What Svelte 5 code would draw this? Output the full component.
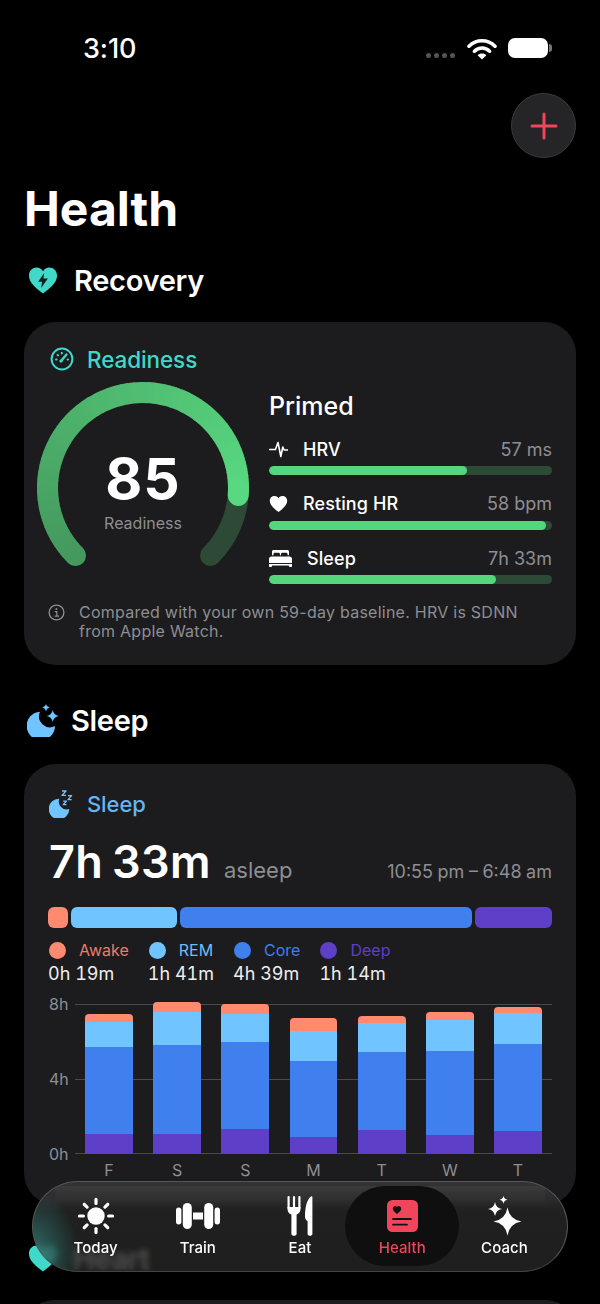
<script>
  const sleepColors = { awake: '#ff8a70', rem: '#70c4ff', core: '#3f7fee', deep: '#5e3fc8' };

  const metrics = [
    { name: 'HRV', value: '57 ms', pct: 70, icon: 'ecg' },
    { name: 'Resting HR', value: '58 bpm', pct: 97.9, icon: 'heart' },
    { name: 'Sleep', value: '7h 33m', pct: 80.2, icon: 'bed' }
  ];

  const legend = [
    { key: 'awake', label: 'Awake', value: '0h 19m', text: '#e87f68' },
    { key: 'rem', label: 'REM', value: '1h 41m', text: '#70bdf5' },
    { key: 'core', label: 'Core', value: '4h 39m', text: '#3f7fee' },
    { key: 'deep', label: 'Deep', value: '1h 14m', text: '#5e3fc8' }
  ];

  // pixel heights per stage, 150px = 8h
  const week = [
    { day: 'F', awake: 7.4, rem: 25.6, core: 87, deep: 19.7 },
    { day: 'S', awake: 10, rem: 33, core: 88.7, deep: 20 },
    { day: 'S', awake: 9.4, rem: 28.6, core: 87, deep: 24.7 },
    { day: 'M', awake: 12.4, rem: 30.6, core: 75.8, deep: 17 },
    { day: 'T', awake: 6.7, rem: 29, core: 78.3, deep: 24 },
    { day: 'W', awake: 7.7, rem: 31.3, core: 84.3, deep: 18.7 },
    { day: 'T', awake: 6, rem: 31.3, core: 86.7, deep: 23 }
  ];

  const tabs = ['Today', 'Train', 'Eat', 'Health', 'Coach'];

  // --- gauge ---
  const cx = 106;
  const cy = 106;
  const r = 95.5;

  function point(deg) {
    const a = (deg * Math.PI) / 180;
    return `${(cx + r * Math.cos(a)).toFixed(2)} ${(cy + r * Math.sin(a)).toFixed(2)}`;
  }

  function arc(from, to) {
    const large = to - from > 180 ? 1 : 0;
    return `M${point(from)} A${r} ${r} 0 ${large} 1 ${point(to)}`;
  }

  const start = 135;
  const sweep = 270 * 0.85;
  const steps = 60;
  const gaugeParts = Array.from({ length: steps }, (_, i) => {
    const t = i / (steps - 1);
    const c = [0x45 + t * (0x58 - 0x45), 0x99 + t * (0xd8 - 0x99), 0x5e + t * (0x80 - 0x5e)].map(Math.round);
    return {
      d: arc(start + (sweep * i) / steps, start + (sweep * (i + 1)) / steps + (i === steps - 1 ? 0 : 0.5)),
      color: `rgb(${c.join(',')})`,
      cap: i === 0 || i === steps - 1
    };
  });

  function star(x, y, s, k = 0.16) {
    const c = s * k;
    return `M${x} ${y - s}Q${x + c} ${y - c} ${x + s} ${y}Q${x + c} ${y + c} ${x} ${y + s}Q${x - c} ${y + c} ${x - s} ${y}Q${x - c} ${y - c} ${x} ${y - s}Z`;
  }

  const sunRays = [0, 45, 90, 135, 180, 225, 270, 315];
  const heartPath = 'M10 18C4 13.5 .8 10.3 .8 6.2 .8 3 3.2 1 5.8 1 7.6 1 9.2 1.9 10 3.4 10.8 1.9 12.4 1 14.2 1 16.8 1 19.2 3 19.2 6.2 19.2 10.3 16 13.5 10 18Z';
</script>

<div class="page">
  <div class="status">
    <span class="clock">3:10</span>
    <div class="status-icons">
      <div class="signal"><i></i><i></i><i></i><i></i></div>
      <svg class="wifi" width="30" height="22" viewBox="0 0 30 22">
        <path d="M2 8.2C9.4 1 20.6 1 28 8.2" fill="none" stroke="#fff" stroke-width="3.6" stroke-linecap="round" />
        <path d="M7.4 13.2C11.8 9 18.2 9 22.6 13.2" fill="none" stroke="#fff" stroke-width="3.6" stroke-linecap="round" />
        <path d="M10.6 17.2C13 14.8 17 14.8 19.4 17.2L15 21.6Z" fill="#fff" />
      </svg>
      <div class="battery"></div>
      <div class="nub"></div>
    </div>
  </div>

  <div class="add-row">
    <button class="add" aria-label="Add">
      <svg width="28" height="28" viewBox="0 0 28 28">
        <path d="M14 2V26M2 14H26" stroke="#f0455a" stroke-width="3" stroke-linecap="round" />
      </svg>
    </button>
  </div>

  <h1>Health</h1>

  <div class="section-head first">
    <svg width="32" height="29" viewBox="0 0 20 19">
      <path d={heartPath} fill="#40d8c8" />
      <path d="M10.8 4.6 6.8 10.4H9.4L8.8 14.4 13.2 8.2H10.3Z" fill="#10201f" />
    </svg>
    <span>Recovery</span>
  </div>

  <section class="card readiness">
    <div class="card-title teal">
      <svg width="24" height="24" viewBox="0 0 24 24" fill="none" stroke="#40d8c8">
        <circle cx="12" cy="12" r="10.4" stroke-width="2" />
        <path d="M11 14 16.5 7.5" stroke-width="2.4" stroke-linecap="round" />
        <path d="M6 12.5H6.6M7.6 8 8 8.4M11.8 5.8V6.4M17.6 12.5H18" stroke-width="2" stroke-linecap="round" />
        <circle cx="11" cy="14" r="1.6" fill="#40d8c8" stroke="none" />
      </svg>
      <span>Readiness</span>
    </div>

    <div class="ready-body">
      <div class="gauge">
        <svg width="212" height="186" viewBox="0 0 212 186" fill="none">
          <path d={arc(135, 405)} stroke="#2c4a36" stroke-width="21" stroke-linecap="round" />
          {#each gaugeParts as part}
            <path d={part.d} stroke={part.color} stroke-width="21" stroke-linecap={part.cap ? 'round' : 'butt'} />
          {/each}
        </svg>
        <div class="gauge-text">
          <div class="score">85</div>
          <div class="score-label">Readiness</div>
        </div>
      </div>

      <div class="metrics">
        <div class="state">Primed</div>
        {#each metrics as m}
          <div class="metric">
            <div class="metric-row">
              {#if m.icon === 'ecg'}
                <svg width="19" height="18" viewBox="0 0 19 18" fill="none">
                  <path d="M.6 9.5H6.4L9 2.5 11.8 16.5 13.8 7 15.2 10H18.6" stroke="#fff" stroke-width="1.6" stroke-linejoin="round" stroke-linecap="round" />
                </svg>
              {:else if m.icon === 'heart'}
                <svg width="19" height="18" viewBox="0 0 20 19"><path d={heartPath} fill="#fff" /></svg>
              {:else}
                <svg width="23" height="17" viewBox="0 0 23 17" fill="#fff">
                  <path d="M3 1.6C3 .7 3.7 0 4.6 0H18.4C19.3 0 20 .7 20 1.6V5.2H18.6V4.4C18.6 3.4 18 2.8 17 2.8H13.6C12.6 2.8 12 3.4 12 4.4V5.2H11V4.4C11 3.4 10.4 2.8 9.4 2.8H6C5 2.8 4.4 3.4 4.4 4.4V5.2H3Z" />
                  <path d="M2.4 6.4H20.6C21.9 6.4 23 7.5 23 8.8V13H0V8.8C0 7.5 1.1 6.4 2.4 6.4Z" />
                  <path d="M0 14H23V16.2C23 16.6 22.6 17 22.2 17H21C20.6 17 20.4 16.8 20.2 16.4L19.8 15.4H3.2L2.8 16.4C2.6 16.8 2.4 17 2 17H.8C.4 17 0 16.6 0 16.2Z" />
                </svg>
              {/if}
              <span class="metric-name">{m.name}</span>
              <span class="metric-value">{m.value}</span>
            </div>
            <div class="track"><div class="fill" style="width: {m.pct}%"></div></div>
          </div>
        {/each}
      </div>
    </div>

    <div class="note">
      <svg width="17" height="17" viewBox="0 0 17 17" fill="none" stroke="#8e8e93">
        <circle cx="8.5" cy="8.5" r="7.4" stroke-width="1.3" />
        <path d="M6.8 7.6H8.8V12M6.6 12.2H11" stroke-width="1.2" />
        <circle cx="8.4" cy="5" r="1" fill="#8e8e93" stroke="none" />
      </svg>
      <p>Compared with your own 59-day baseline. HRV is SDNN from Apple Watch.</p>
    </div>
  </section>

  <div class="section-head sleep-head">
    <svg width="32" height="33" viewBox="0 0 32 33" fill="#70c4ff">
      <path d="M13 7.7A14.2 14.2 0 1 0 28 22 11 11 0 0 1 13 7.7Z" />
      <path d={star(25.7, 12, 6)} />
      <path d={star(19, 3.6, 3.6)} />
    </svg>
    <span>Sleep</span>
  </div>

  <section class="card sleep">
    <div class="card-title blue">
      <svg width="24" height="28" viewBox="0 0 24 28">
        <path d="M10.3 8.7A10.3 10.3 0 1 0 20.3 19 8 8 0 0 1 10.3 8.7Z" fill="#70c4ff" />
        <path d="M13 1H17L13 5.4H17M19 5.6H22.6L19 9.6H22.6M14.2 11.2H17.4L14.2 14.6H17.4" fill="none" stroke="#70c4ff" stroke-width="1.3" stroke-linejoin="round" />
      </svg>
      <span>Sleep</span>
    </div>

    <div class="totals">
      <span class="total">7h 33m</span>
      <span class="asleep">asleep</span>
      <span class="window">10:55 pm – 6:48 am</span>
    </div>

    <div class="stages">
      <div style="width: 20px; background: {sleepColors.awake}"></div>
      <div style="width: 106px; background: {sleepColors.rem}"></div>
      <div style="width: 292px; background: {sleepColors.core}"></div>
      <div style="flex: 1; background: {sleepColors.deep}"></div>
    </div>

    <div class="legend">
      {#each legend as item}
        <div class="legend-item">
          <div class="legend-key">
            <i style="background: {sleepColors[item.key]}"></i>
            <span style="color: {item.text}">{item.label}</span>
          </div>
          <div class="legend-value">{item.value}</div>
        </div>
      {/each}
    </div>

    <div class="chart">
      <div class="y-axis"><span>8h</span><span>4h</span><span>0h</span></div>
      <div class="plot-wrap">
        <div class="plot">
          <div class="grid"><i></i><i></i><i></i></div>
          {#each week as d}
            <div class="bar">
              <div style="height: {d.awake}px; background: {sleepColors.awake}" class="cap"></div>
              <div style="height: {d.rem}px; background: {sleepColors.rem}"></div>
              <div style="height: {d.core}px; background: {sleepColors.core}"></div>
              <div style="height: {d.deep}px; background: {sleepColors.deep}"></div>
            </div>
          {/each}
        </div>
        <div class="days">
          {#each week as d}<span>{d.day}</span>{/each}
        </div>
      </div>
    </div>
  </section>

  <div class="section-head third">
    <svg width="32" height="29" viewBox="0 0 20 19"><path d={heartPath} fill="#40d8c8" /></svg>
    <span>Heart</span>
  </div>

  <section class="card last"></section>

  <nav class="tabbar">
    {#each tabs as tab}
      <div class="tab" class:active={tab === 'Health'}>
        <div class="tab-icon">
          {#if tab === 'Today'}
            <svg width="40" height="40" viewBox="0 0 40 40">
              <circle cx="20" cy="20" r="8.7" fill="#fff" />
              {#each sunRays as deg}
                <path d="M20 3.4V7.4" transform="rotate({deg} 20 20)" stroke="#fff" stroke-width="3.2" stroke-linecap="round" />
              {/each}
            </svg>
          {:else if tab === 'Train'}
            <svg width="44" height="26" viewBox="0 0 44 26" fill="#fff">
              <rect x="0" y="4.5" width="5.4" height="17" rx="2.7" />
              <rect x="6.8" y="0" width="9" height="26" rx="4.5" />
              <rect x="17" y="9.5" width="10" height="7" />
              <rect x="28.2" y="0" width="9" height="26" rx="4.5" />
              <rect x="38.6" y="4.5" width="5.4" height="17" rx="2.7" />
            </svg>
          {:else if tab === 'Eat'}
            <svg width="26" height="40" viewBox="0 0 26 40" fill="#fff">
              <rect x=".5" y="0" width="2.2" height="13" rx="1.1" />
              <rect x="5.9" y="0" width="2.2" height="13" rx="1.1" />
              <rect x="11.3" y="0" width="2.2" height="13" rx="1.1" />
              <path d="M.5 11H13.5V13C13.5 15.6 12 17.6 9.6 18.6V38C9.6 40.4 4.4 40.4 4.4 38V18.6C2 17.6 .5 15.6 .5 13Z" />
              <path d="M24.4 .2C24.9 .1 25.4 .5 25.4 1V38C25.4 40.4 20.6 40.4 20.6 38V25C18.6 24 18 22.6 18 20 18 12 19.6 3 24.4 .2Z" />
            </svg>
          {:else if tab === 'Health'}
            <svg width="31" height="32" viewBox="0 0 31 32">
              <rect width="31" height="32" rx="5.5" fill="#f0455a" />
              <path d="M10 14C7.4 12 5.8 10.5 5.8 8.5 5.8 7 7 6 8.2 6 9 6 9.6 6.4 10 7.1 10.4 6.4 11 6 11.8 6 13 6 14.2 7 14.2 8.5 14.2 10.5 12.6 12 10 14Z" fill="#161012" />
              <path d="M6 19H24M6 24.6H20" stroke="#161012" stroke-width="1.8" stroke-linecap="round" />
            </svg>
          {:else}
            <svg width="36" height="40" viewBox="0 0 36 40" fill="#fff">
              <path d={star(21.5, 25.5, 14, 0.14)} />
              <path d={star(9, 13, 7, 0.14)} />
              <path d={star(17.5, 3.8, 4, 0.14)} />
            </svg>
          {/if}
        </div>
        <span class="tab-label">{tab}</span>
      </div>
    {/each}
  </nav>
</div>

<style>
  :global(body) { background: #000; }

  .page {
    position: relative;
    width: 600px;
    height: 1304px;
    overflow: hidden;
    background: #000;
    color: #fff;
    font-family: Inter, "Noto Sans", sans-serif;
  }

  .status { height: 93px; display: flex; justify-content: space-between; padding: 33px 48px 0 83px; box-sizing: border-box; }
  .clock { font-size: 27px; font-weight: 500; line-height: 32px; letter-spacing: -0.1px; }
  .status-icons { display: flex; align-items: flex-start; padding-top: 5px; }
  .signal { display: flex; gap: 3px; margin-top: 15px; margin-right: 12px; }
  .signal i { width: 5px; height: 5px; border-radius: 50%; background: #555; }
  .wifi { margin-right: 11px; }
  .battery { width: 40px; height: 20px; border-radius: 7px; background: #fff; }
  .nub { width: 3px; height: 8px; margin: 6px 0 0 1px; border-radius: 0 3px 3px 0; background: #777; }

  .add-row { display: flex; justify-content: flex-end; padding-right: 24px; }
  .add {
    width: 65px;
    height: 65px;
    padding: 0;
    display: flex;
    align-items: center;
    justify-content: center;
    border: 1px solid #3a3a3c;
    border-radius: 50%;
    background: #252527;
    box-shadow: 0 2px 8px rgba(0, 0, 0, 0.4);
  }

  h1 { margin: 22px 0 0 24px; font-size: 48px; line-height: 58px; font-weight: 700; }

  .section-head { height: 36px; display: flex; align-items: center; padding-left: 27px; font-size: 29px; font-weight: 600; letter-spacing: -0.3px; }
  .section-head.first { margin-top: 24px; gap: 15px; }
  .sleep-head { margin-top: 37px; gap: 12px; }
  .section-head.third { margin-top: 35px; gap: 14px; }

  .card { margin: 24px 24px 0; padding: 0 24px; background: #1c1c1e; border-radius: 32px; box-sizing: border-box; }
  .readiness { height: 343px; padding-top: 23px; }
  .sleep { height: 441px; margin-top: 26px; padding-top: 26px; }
  .last { height: 60px; margin-top: 24px; }

  .card-title { height: 28px; display: flex; align-items: center; font-weight: 500; font-size: 22.5px; letter-spacing: -0.1px; }
  .teal { color: #40d8c8; gap: 13px; }
  .teal svg { margin-left: 2px; }
  .blue { color: #64b5f0; gap: 14px; font-size: 22px; }
  .blue svg { margin-left: 1px; }

  .ready-body { display: flex; gap: 20px; margin-top: 9px; }
  .gauge { position: relative; width: 212px; height: 186px; margin-left: -11px; flex: none; }
  .gauge svg { display: block; }
  .gauge-text { position: absolute; left: 0; right: 0; top: 68px; text-align: center; }
  .score { font-size: 57px; line-height: 58px; font-weight: 700; letter-spacing: 1px; }
  .score-label { margin-top: 5px; font-size: 16px; line-height: 20px; color: #8e8e93; }

  .metrics { flex: 1; padding-top: 9px; }
  .state { font-size: 25px; line-height: 30px; font-weight: 500; margin-bottom: 17px; }
  .metric { height: 54.5px; }
  .metric-row { height: 22px; display: flex; align-items: center; gap: 15px; }
  .metric-row svg { flex: none; }
  .metric-name { font-size: 18px; font-weight: 500; letter-spacing: 0.1px; }
  .metric-value { margin-left: auto; font-size: 18px; color: #8e8e93; }
  .track { height: 9px; margin-top: 6px; border-radius: 5px; background: #2c4a36; overflow: hidden; }
  .fill { height: 100%; border-radius: 5px; background: #55d67d; }

  .note { display: flex; gap: 14px; margin-top: 1px; color: #8e8e93; }
  .note svg { flex: none; margin-top: 1px; }
  .note p { margin: 0; font-size: 16px; line-height: 19.5px; letter-spacing: 0.25px; }

  .totals { display: flex; align-items: baseline; margin-top: 19px; height: 50px; line-height: 50px; }
  .total { font-size: 45px; font-weight: 600; word-spacing: -3px; letter-spacing: 0.4px; margin-left: 1px; }
  .asleep { margin-left: 13px; font-size: 22px; color: #8e8e93; }
  .window { margin-left: auto; font-size: 18px; color: #8e8e93; word-spacing: -0.5px; }

  .stages { display: flex; gap: 3px; height: 21px; margin-top: 20px; }
  .stages div { border-radius: 6px; }

  .legend { display: flex; gap: 19px; margin-top: 11px; }
  .legend-key { display: flex; align-items: center; gap: 13px; height: 22px; font-size: 16px; }
  .legend-key i { width: 17px; height: 17px; border-radius: 50%; margin-left: 1px; }
  .legend-value { margin-top: 2px; font-size: 18px; line-height: 22px; font-variant-numeric: tabular-nums; color: #eee; }

  .chart { display: flex; margin-top: 19px; }
  .y-axis { width: 26px; height: 170px; margin: -10px 0 0 1px; display: flex; flex-direction: column; justify-content: space-between; font-size: 16px; line-height: 20px; color: #8e8e93; }
  .plot-wrap { flex: 1; }
  .plot { position: relative; height: 150px; display: flex; align-items: flex-end; }
  .grid { position: absolute; inset: 0; display: flex; flex-direction: column; justify-content: space-between; }
  .grid i { height: 1px; background: #4a4a4c; }
  .bar { position: relative; flex: 1; padding: 0 10.2px; display: flex; flex-direction: column; justify-content: flex-end; }
  .cap { border-radius: 4px 4px 0 0; }

  .days { display: flex; margin-top: 6px; font-size: 16px; line-height: 20px; color: #8e8e93; }
  .days span { flex: 1; text-align: center; }

  .tabbar {
    position: absolute;
    left: 32px;
    bottom: 32px;
    width: 536px;
    height: 91px;
    padding: 0 11.5px;
    box-sizing: border-box;
    display: flex;
    border-radius: 46px;
    border: 1px solid #555;
    border-bottom-color: #444;
    background: linear-gradient(180deg, rgba(58, 58, 60, 0.8), rgba(40, 40, 40, 0.8) 35%, rgba(38, 38, 38, 0.8));
    backdrop-filter: blur(3px);
  }
  .tabbar::before {
    content: '';
    position: absolute;
    inset: 0;
    border-radius: inherit;
    background:
      radial-gradient(ellipse 46px 66px at 0 82%, rgba(64, 216, 200, 0.42), rgba(64, 216, 200, 0)),
      linear-gradient(180deg, rgba(255, 255, 255, 0.05), rgba(255, 255, 255, 0)) 22px 4px / 490px 20px no-repeat;
  }
  .tab { position: relative; flex: 1; display: flex; flex-direction: column; align-items: center; }
  .tab.active::before {
    content: '';
    position: absolute;
    left: -6px;
    right: -6px;
    top: 4px;
    bottom: 5px;
    border-radius: 40px;
    background: #0f0f0f;
  }
  .tab-icon { position: relative; height: 40px; margin-top: 14px; display: flex; align-items: center; justify-content: center; }
  .tab-label { position: relative; margin-top: 3px; font-size: 15px; line-height: 18px; font-weight: 500; letter-spacing: 0.05px; }
  .active .tab-label { color: #f0455a; }
</style>
